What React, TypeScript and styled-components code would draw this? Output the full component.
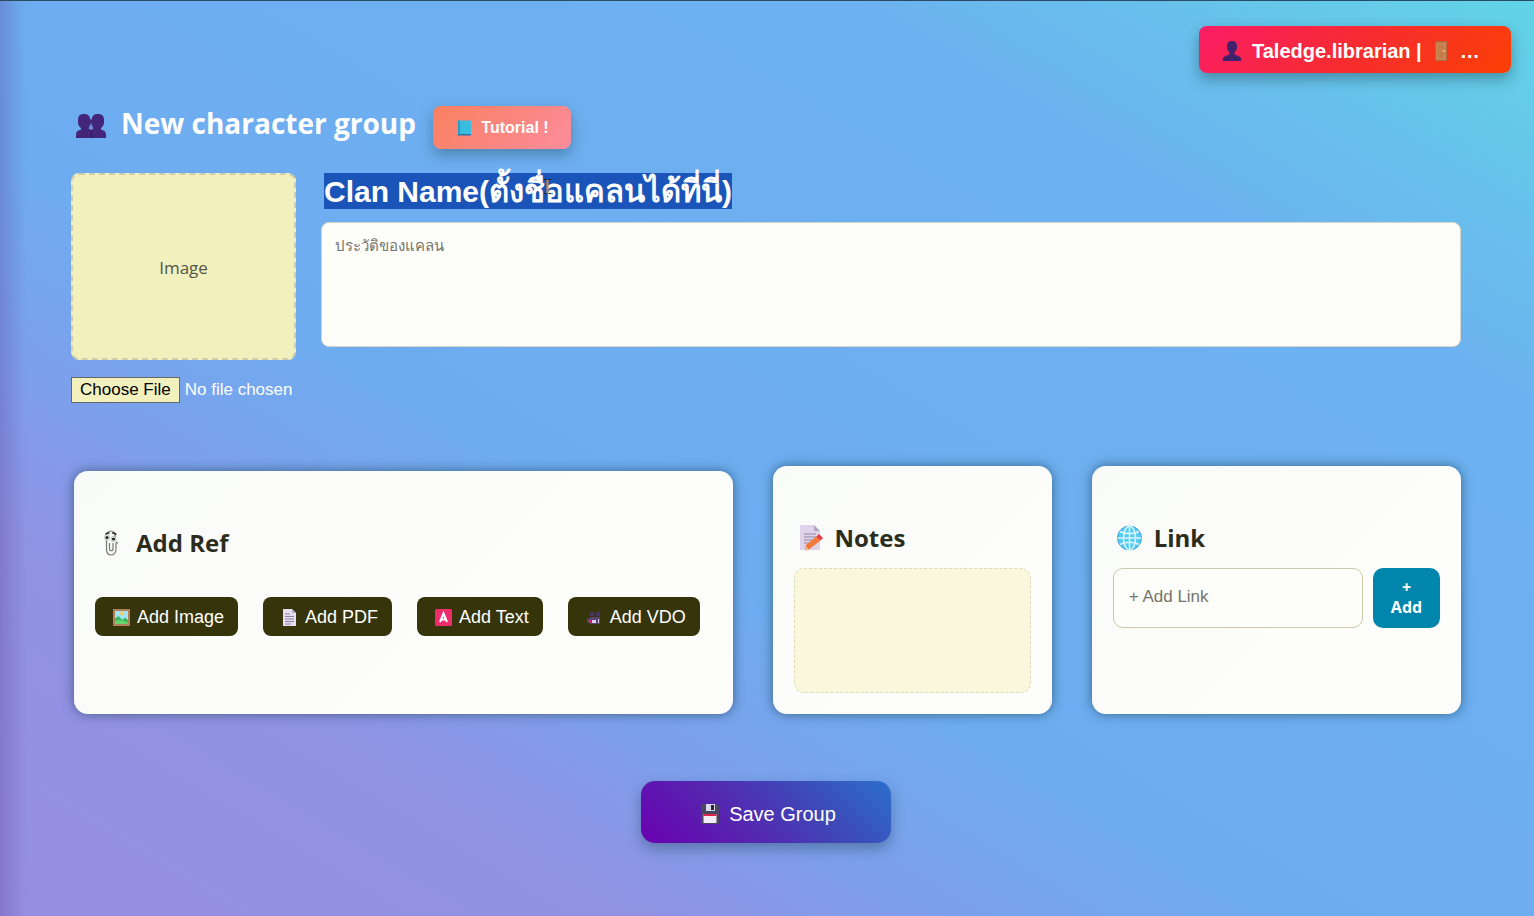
import React from 'react';
import styled, { createGlobalStyle } from 'styled-components';

const arial = '"Liberation Sans", Arial, "Noto Sans", sans-serif';
const segoe = '"Open Sans", "Noto Sans", sans-serif';

const Global = createGlobalStyle`
  *, *::before, *::after { box-sizing: border-box; }
  body { margin: 0; font-family: ${segoe}; }
  button, input, textarea { font-family: ${arial}; }
  h1, h2 { margin: 0; }
`;

const Page = styled.div`
  min-height: 100vh;
  padding: 25px 23px 40px 71px;
  border-top: 1px solid #2b4a66;
  background:
    linear-gradient(to right, rgba(90, 60, 150, 0.28), rgba(90, 60, 150, 0) 26px),
    linear-gradient(to top right, #968ee0 0%, #9092e4 21%, #7ca0ec 31%, #6eacf0 42%, #6cb2f0 78%, #62d4e6 100%);
`;

const TopBar = styled.header`
  display: flex;
  justify-content: flex-end;
`;

const AccountButton = styled.button`
  display: flex;
  align-items: center;
  gap: 10px;
  width: 312px;
  height: 47px;
  padding: 3px 23px 0;
  border: 0;
  border-radius: 8px;
  background: linear-gradient(135deg, #fb1c66, #f62c30 50%, #fb4004);
  box-shadow: 0 6px 14px rgba(30, 70, 80, 0.45);
  color: #fff;
  font-size: 20px;
  font-weight: bold;
  white-space: nowrap;
`;

const Main = styled.main`
  padding-right: 50px;
`;

const TitleRow = styled.div`
  display: flex;
  align-items: center;
  gap: 17px;
  margin-top: 32px;
`;

const Title = styled.h1`
  display: flex;
  align-items: center;
  gap: 14px;
  padding: 0 0 8px 4px;
  color: #fff;
  font: 700 28px/36px ${segoe};
`;

const TutorialButton = styled.button`
  display: flex;
  align-items: center;
  justify-content: center;
  gap: 8px;
  width: 138px;
  height: 43px;
  padding: 2px 0 0;
  border: 0;
  border-radius: 8px;
  background: linear-gradient(135deg, #fa8060, #fb8c9c);
  box-shadow: 0 6px 14px rgba(30, 70, 80, 0.4);
  color: #fff;
  font-size: 16px;
  font-weight: bold;
`;

const Profile = styled.section`
  display: flex;
  gap: 25px;
  margin-top: 24px;
`;

const Picture = styled.div`
  width: 225px;
`;

const Preview = styled.div`
  display: flex;
  align-items: center;
  justify-content: center;
  height: 187px;
  padding-top: 2px;
  border: 2px dashed #d0cdae;
  border-radius: 8px;
  background: #f2f0bc;
  color: #55554c;
  font-size: 17px;
`;

const FileInput = styled.input`
  display: block;
  width: 100%;
  margin-top: 17px;
  color: #fff;
  font-size: 17px;

  &::file-selector-button {
    height: 26px;
    margin-right: 5px;
    padding: 0 8px;
    border: 1px solid #666;
    border-radius: 0;
    background: #f2f0bc;
    color: #000;
    font: 17px ${arial};
  }
`;

const Details = styled.div`
  flex: 1;
  min-width: 0;
`;

const ClanName = styled.h2`
  position: relative;
  width: fit-content;
  height: 36px;
  margin: 0 0 13px 3px;
  padding-top: 2px;
  background: #1b54b8;
  color: #fff;
  font: 700 30px/34px ${arial};
  white-space: nowrap;
`;

const Thai = styled.span`
  font-size: 31px;
`;

const Caret = styled.svg`
  position: absolute;
  left: 220px;
  top: 5px;
`;

const History = styled.textarea`
  display: block;
  width: 100%;
  height: 125px;
  padding: 11px 13px;
  border: 1px solid #d8d4c8;
  border-radius: 8px;
  background: #fdfdfa;
  font-size: 15px;
  line-height: 24px;
  resize: none;

  &::placeholder { color: #75756a; }
`;

const Panels = styled.section`
  display: grid;
  grid-template-columns: minmax(0, 658fr) minmax(0, 279fr) minmax(0, 369fr);
  gap: 40px;
  align-items: end;
  margin-top: 63px;
  padding-left: 3px;
`;

const Panel = styled.section<{ $short?: boolean }>`
  height: ${(p) => (p.$short ? 243 : 248)}px;
  padding: 54px 21px 21px;
  border-radius: 14px;
  background: linear-gradient(135deg, #f9fbf8, #fdfdfb 60%);
  box-shadow: 0 0 12px rgba(20, 55, 70, 0.6);
`;

const PanelTitle = styled.h2`
  display: flex;
  align-items: center;
  gap: 10px;
  padding-left: 3px;
  color: #2c2c1c;
  font: 700 24px/36px ${segoe};
`;

const RefButtons = styled.div`
  display: flex;
  gap: 25px;
  margin-top: 36px;
`;

const RefButton = styled.button`
  display: flex;
  align-items: center;
  gap: 6px;
  height: 39px;
  padding: 1px 14px 0 17px;
  border: 0;
  border-radius: 8px;
  background: #35340a;
  color: #fff;
  font-size: 18px;
  white-space: nowrap;
`;

const Notes = styled.textarea`
  display: block;
  width: 100%;
  height: 125px;
  margin-top: 12px;
  border: 1px dashed #dcdab8;
  border-radius: 10px;
  background: #f9f8dc;
  resize: none;
`;

const LinkForm = styled.form`
  display: flex;
  gap: 10px;
  margin-top: 12px;
`;

const LinkInput = styled.input`
  flex: 1;
  min-width: 0;
  height: 60px;
  padding: 0 15px 2px;
  border: 1px solid #ccc9a8;
  border-radius: 10px;
  background: #fdfdfa;
  font-size: 17px;

  &::placeholder { color: #75756a; }
`;

const LinkButton = styled.button`
  width: 67px;
  height: 60px;
  padding: 0 14px 2px;
  border: 0;
  border-radius: 10px;
  background: #0085ac;
  color: #fff;
  font: 700 16px/20px ${segoe};
`;

const SaveButton = styled.button`
  display: flex;
  align-items: center;
  justify-content: center;
  gap: 9px;
  width: 250px;
  height: 62px;
  margin: 67px auto 0;
  padding: 4px 0 0 4px;
  border: 0;
  border-radius: 14px;
  background: linear-gradient(45deg, #6a00b0, #5428b0 40%, #3c4cb8 70%, #2c70cc);
  box-shadow: 0 6px 14px rgba(30, 60, 80, 0.4);
  color: #fff;
  font-size: 20px;
`;

const Icon = styled.svg`
  display: block;
  flex: none;
`;

const PersonIcon = () => (
  <Icon width="20" height="22" viewBox="0 0 20 22" fill="#40226c" aria-hidden="true">
    <path d="M5 6C5 2.500 7 1 10 1s5 1.500 5 5v1.500c0 2-1 3.500-2.500 4.500v2.500l4 1.500c2 .8 2.800 2 2.800 4.500v.5H.7v-.5c0-2.500.8-3.700 2.800-4.500l4-1.500V12C6 11 5 9.500 5 7.500z" />
  </Icon>
);

const PeopleIcon = () => (
  <Icon width="32" height="32" viewBox="0 0 32 32" fill="#43257a" aria-hidden="true">
    <path d="M3 13c0-4 2-6 6-6s6 2 6.300 5.500h1.400C17 9 19 7 23 7s6 2 6 6v2c0 2.500-1 4.500-3 6v1.500l2.500 1c2 .8 2.500 2.500 2.500 5V31H1v-2.500c0-2.500.5-4.200 2.500-5l2.500-1V21c-2-1.500-3-3.500-3-6z" />
    <path d="m16 16-2.500 5.500L16 23l2.500-1.500z" fill="#6c8ad8" />
    <path d="M16 24v7" fill="none" stroke="#2d174f" />
  </Icon>
);

const DoorIcon = () => (
  <Icon width="18" height="22" viewBox="0 0 18 22" aria-hidden="true">
    <path d="M3 1h12v20H3z" fill="#b0683f" />
    <path d="M4 2.500h10V20H4z" fill="#c98653" />
    <path d="M6 4.500h6v5H6zM6 12h6v6H6z" fill="#c27d4c" />
    <circle cx="12" cy="11" r="1" fill="#f1c27b" />
  </Icon>
);

const BookIcon = () => (
  <Icon width="18" height="18" viewBox="0 0 18 18" aria-hidden="true">
    <path d="M3 1.500h13V15H3z" fill="#38bce0" />
    <path d="M3 1.500h2V15H3z" fill="#269cc8" />
    <path d="M3 15h13v1.500H3z" fill="#2874a8" />
  </Icon>
);

const ClipIcon = () => (
  <Icon width="28" height="28" viewBox="0 0 28 28" fill="none" aria-hidden="true">
    <path d="M8.500 11v9c0 4 2 6 4.500 6s5-2 5-6v-5.500c0-1.500 1.500-1.500 1.500 0M11.500 14v5.500c0 3 3.500 3 3.500 0V14M9 6c0-2 2-4 4-4s4 2 4 5v3" stroke="#77776c" strokeWidth="1.200" />
    <path d="M7.500 5.500c1-2 3-2 4-1M14 4.500c2-1.200 3.500 0 4 1.500" stroke="#29292d" strokeWidth="1.400" />
    <ellipse cx="9" cy="8.500" rx="2.500" ry="2.700" fill="#fff" stroke="#999" strokeWidth=".6" />
    <ellipse cx="15.500" cy="10" rx="2.500" ry="2.700" fill="#fff" stroke="#999" strokeWidth=".6" />
    <circle cx="9" cy="8.500" r="1.600" fill="#222" />
    <circle cx="15.500" cy="10" r="1.600" fill="#222" />
  </Icon>
);

const PictureIcon = () => (
  <Icon width="19" height="19" viewBox="0 0 19 19" aria-hidden="true">
    <path d="M1 1h17v17H1z" fill="#b28058" />
    <path d="M3 3h13v13H3z" fill="#a2e3fb" />
    <circle cx="10" cy="5.500" r="1.900" fill="#f6c84c" />
    <path d="M3 10.500 6.500 8l4 4L13 9.500l3 2.500v4H3z" fill="#35b85c" />
    <path d="M3 13c4-2 7-1 13 2v1H3z" fill="#66d36c" />
  </Icon>
);

const PageIcon = () => (
  <Icon width="19" height="19" viewBox="0 0 19 19" aria-hidden="true">
    <path d="M3 1h9l4 4v13H3z" fill="#e6dff2" />
    <path d="M12 1v4h4z" fill="#b4a8c8" />
    <path d="M5 6h5M5 8.500h9M5 11h9M5 13.500h9M5 16h6" stroke="#8e849e" />
  </Icon>
);

const LetterIcon = () => (
  <Icon width="19" height="19" viewBox="0 0 19 19" aria-hidden="true">
    <rect x="1" y="1" width="17" height="17" rx="1.500" fill="#ee2c6c" />
    <path d="m6 14 3.500-8.500L13 14M7.500 11.500h4" fill="none" stroke="#fff" strokeWidth="2" />
  </Icon>
);

const CameraIcon = () => (
  <Icon width="19" height="19" viewBox="0 0 19 19" aria-hidden="true">
    <circle cx="7" cy="6" r="2.500" fill="#47365f" />
    <circle cx="13" cy="6" r="2.500" fill="#47365f" />
    <path d="M5 9h10v7H5zM2 10l3 1v3l-3 1z" fill="#594475" />
    <path d="M4 12h2v3H4z" fill="#e62862" />
    <path d="M7 12h4v3H7zM13 11h1v4h-1z" fill="#d8d0e4" />
  </Icon>
);

const MemoIcon = () => (
  <Icon width="28" height="28" viewBox="0 0 28 28" aria-hidden="true">
    <path d="M3 1h14l6 6v19H3z" fill="#ded3e8" />
    <path d="M17 1v6h6z" fill="#b1a4c4" />
    <path d="M7 10h12M7 13h12M7 16h9M7 19h6" stroke="#9489a5" />
    <path d="m9 21 11-9 3.500 4.500L12.500 25 8 26.500z" fill="#f4793c" />
    <path d="m19.500 12.500 2.500-2.500 4 4-2.500 2.500z" fill="#e43b4c" />
    <path d="m8 26.500 1-4.500 3 4z" fill="#e9bd8c" />
  </Icon>
);

const GlobeIcon = () => (
  <Icon width="28" height="28" viewBox="0 0 28 28" aria-hidden="true">
    <circle cx="13.500" cy="14" r="12" fill="#58cbf5" stroke="#379edb" />
    <path d="M1.500 14h24M13.500 2v24M4 7.500c5 3 14 3 19 0M4 20.500c5-3 14-3 19 0" fill="none" stroke="#d9f6ff" strokeWidth="1.500" />
    <ellipse cx="13.500" cy="14" rx="6" ry="12" fill="none" stroke="#d9f6ff" strokeWidth="1.500" />
  </Icon>
);

const DiskIcon = () => (
  <Icon width="20" height="22" viewBox="0 0 20 22" aria-hidden="true">
    <path d="M1 1h16l2 2v18H1z" fill="#4c4760" />
    <path d="M6 1h9v7H6z" fill="#dcd7ea" />
    <path d="M11 2h3v5h-3z" fill="#282337" />
    <path d="M3.500 11h13v9h-13z" fill="#f1edf7" />
    <path d="M3.500 11h13v2h-13z" fill="#dc244c" />
  </Icon>
);

const references = [
  { label: 'Add Image', icon: <PictureIcon /> },
  { label: 'Add PDF', icon: <PageIcon /> },
  { label: 'Add Text', icon: <LetterIcon /> },
  { label: 'Add VDO', icon: <CameraIcon /> },
];

export default function App() {
  return (
    <>
      <Global />
      <Page>
        <TopBar>
          <AccountButton type="button">
            <PersonIcon />
            <span>Taledge.librarian |</span>
            <DoorIcon />
            <span>…</span>
          </AccountButton>
        </TopBar>
        <Main>
          <TitleRow>
            <Title><PeopleIcon />New character group</Title>
            <TutorialButton type="button"><BookIcon />Tutorial !</TutorialButton>
          </TitleRow>
          <Profile>
            <Picture>
              <Preview>Image</Preview>
              <FileInput type="file" aria-label="Group image" />
            </Picture>
            <Details>
              <ClanName>
                Clan Name(<Thai>ตั้งชื่อแคลนได้ที่นี่</Thai>)
                <Caret width="7" height="18" viewBox="0 0 7 18" fill="none" aria-hidden="true">
                  <path d="M3.500 2v13" stroke="#d8862c" strokeWidth="2" />
                  <path d="M0 1.500h2.500M4.500 1.500H7M0 15.500h2.500M4.500 15.500H7" stroke="#222" />
                </Caret>
              </ClanName>
              <History aria-label="ประวัติของแคลน" placeholder="ประวัติของแคลน" />
            </Details>
          </Profile>
          <Panels>
            <Panel $short>
              <PanelTitle><ClipIcon />Add Ref</PanelTitle>
              <RefButtons>
                {references.map(({ label, icon }) => (
                  <RefButton type="button" key={label}>{icon}{label}</RefButton>
                ))}
              </RefButtons>
            </Panel>
            <Panel>
              <PanelTitle><MemoIcon />Notes</PanelTitle>
              <Notes aria-label="Notes" />
            </Panel>
            <Panel>
              <PanelTitle><GlobeIcon />Link</PanelTitle>
              <LinkForm onSubmit={(e) => e.preventDefault()}>
                <LinkInput aria-label="Link" placeholder="+ Add Link" />
                <LinkButton type="submit">+ Add</LinkButton>
              </LinkForm>
            </Panel>
          </Panels>
          <SaveButton type="button"><DiskIcon />Save Group</SaveButton>
        </Main>
      </Page>
    </>
  );
}
